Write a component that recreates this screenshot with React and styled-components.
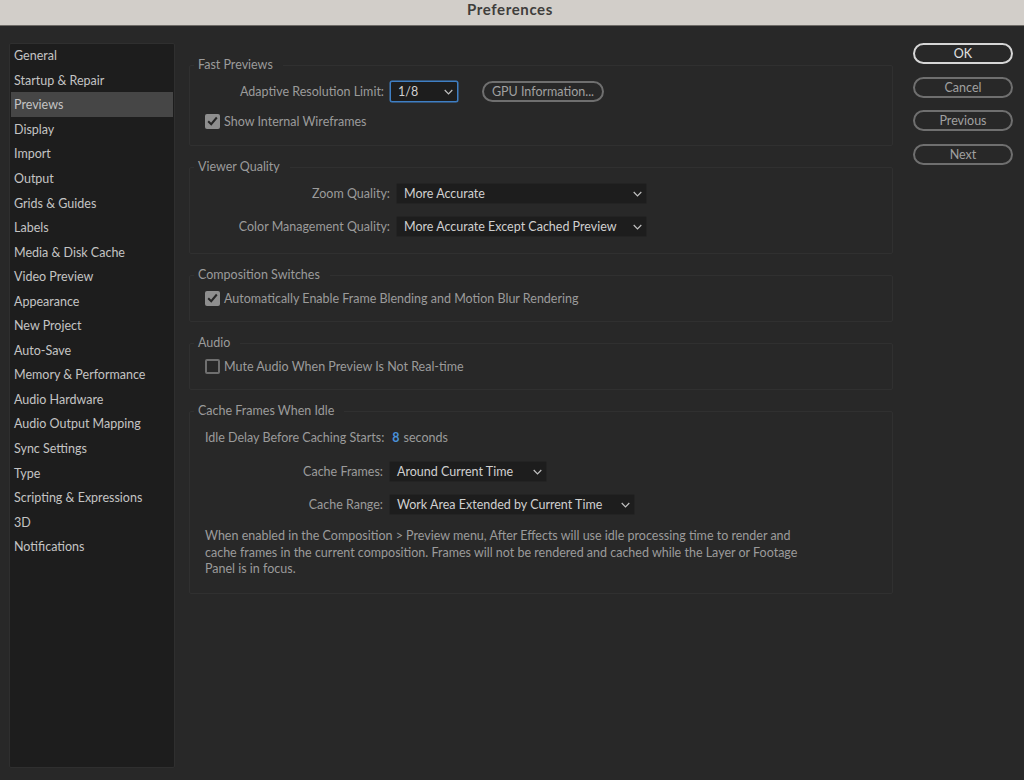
import React from "react";
import styled, { createGlobalStyle } from "styled-components";

const Global = createGlobalStyle`
  html, body { margin: 0; padding: 0; background: #282828; }
  body { font-family: "Lato", "Open Sans", sans-serif; overflow: hidden; }
  * { box-sizing: border-box; }
`;

const Window = styled.div`
  width: 1024px;
  height: 780px;
  display: flex;
  flex-direction: column;
  background: #282828;
`;

const TitleBar = styled.div`
  height: 26px;
  flex: none;
  display: flex;
  align-items: flex-start;
  justify-content: center;
  padding-right: 4px;
  background: #d2cec9;
  border-bottom: 1px solid #6e6b67;
  color: #3f3e3c;
  font-size: 15px;
  font-weight: 700;
  line-height: 19px;
  letter-spacing: 0.6px;
`;

const Body = styled.div`
  flex: 1;
  display: flex;
  padding: 17px 11px 12px 9px;
`;

const Sidebar = styled.nav`
  width: 166px;
  flex: none;
  display: flex;
  flex-direction: column;
  padding: 0 1px 1px;
  background: #1d1d1d;
  border: 1px solid #2f2f2f;
  border-radius: 2px;
`;

const NavItem = styled.div`
  height: 24.55px;
  flex: none;
  display: flex;
  align-items: center;
  padding: 1px 0 0 3px;
  font-size: 12.5px;
  color: #c4c4c4;
  background: ${(p) => (p.$active ? "#464646" : "transparent")};
  &:first-child { margin-top: -1px; }
`;

const Main = styled.main`
  width: 704px;
  flex: none;
  margin-left: 14px;
  margin-top: 13px;
  display: flex;
  flex-direction: column;
  gap: 12px;
`;

const Group = styled.fieldset`
  margin: 0;
  min-width: 0;
  height: ${(p) => p.$h}px;
  padding: 0 16px 0 15px;
  border: 1px solid #303030;
  border-radius: 2px;
  display: flex;
  flex-direction: column;
`;

const Legend = styled.legend`
  margin-left: -11px;
  padding: 0 10px 0 4px;
  height: 18px;
  line-height: 18px;
  font-size: 12.5px;
  color: #9b9b9b;
`;

const Row = styled.div`
  display: flex;
  align-items: center;
  height: 21px;
  margin-top: ${(p) => p.$top || 0}px;
`;

const Label = styled.div`
  width: ${(p) => p.$w}px;
  flex: none;
  margin-right: 6px;
  text-align: right;
  font-size: 12.5px;
  color: #9b9b9b;
  white-space: nowrap;
`;

const Select = styled.div`
  width: ${(p) => p.$w}px;
  height: 21px;
  flex: none;
  display: flex;
  align-items: center;
  justify-content: space-between;
  padding: 0 4px 0 7px;
  background: #1d1d1d;
  border: ${(p) => (p.$focus ? "1px solid #3f7fc4" : "1px solid #232323")};
  border-radius: 2px;
  font-size: 12.5px;
  color: #d0d0d0;
  white-space: nowrap;
  box-shadow: ${(p) => (p.$focus ? "0 0 0 0.5px #3f7fc4" : "none")};
`;

const Chevron = styled.svg`
  width: 9px;
  height: 6px;
  flex: none;
  fill: none;
  stroke: #c0c0c0;
  stroke-width: 1.2;
`;

const PillButton = styled.button`
  width: ${(p) => p.$w || 100}px;
  height: 21px;
  flex: none;
  margin-left: ${(p) => p.$left || 0}px;
  padding: 0;
  background: transparent;
  border: 2px solid ${(p) => (p.$primary ? "#d6d6d6" : "#6f6f6f")};
  border-radius: 11px;
  font-family: inherit;
  font-size: 12.5px;
  line-height: 15px;
  color: ${(p) => (p.$primary ? "#e2e2e2" : "#a0a0a0")};
`;

const CheckRow = styled.div`
  display: flex;
  align-items: center;
  gap: 4px;
  height: 16px;
  margin-top: ${(p) => p.$top || 0}px;
  font-size: 12.5px;
  color: #9b9b9b;
  white-space: nowrap;
`;

const Box = styled.span`
  width: 15px;
  height: 15px;
  flex: none;
  display: flex;
  align-items: center;
  justify-content: center;
  border-radius: 2px;
  background: ${(p) => (p.$checked ? "#8e8e8e" : "transparent")};
  border: ${(p) => (p.$checked ? "none" : "2px solid #6f6f6f")};
`;

const Tick = styled.svg`
  width: 11px;
  height: 10px;
  fill: none;
  stroke: #262626;
  stroke-width: 2;
`;

const Plain = styled.div`
  height: 17px;
  line-height: 17px;
  margin-top: ${(p) => p.$top || 0}px;
  font-size: 12.5px;
  color: #9b9b9b;
`;

const Num = styled.span`
  color: #4a90d9;
  margin: 0 4px 0 8px;
  font-weight: 700;
`;

const Note = styled.p`
  margin: 13px 0 0;
  width: 610px;
  font-size: 12.5px;
  line-height: 16.6px;
  color: #9b9b9b;
`;

const Actions = styled.div`
  flex: none;
  margin-left: 20px;
  display: flex;
  flex-direction: column;
  gap: 12.5px;
`;

const Arrow = () => (
  <Chevron viewBox="0 0 9 6"><path d="M0.7 1 L4.5 4.8 L8.3 1" /></Chevron>
);

const Check = ({ checked, children, top }) => (
  <CheckRow $top={top}>
    <Box $checked={checked}>
      {checked && <Tick viewBox="0 0 11 10"><path d="M1.2 5.2 L4.2 8.2 L9.8 1.5" /></Tick>}
    </Box>
    {children}
  </CheckRow>
);

const navItems = [
  "General", "Startup & Repair", "Previews", "Display", "Import", "Output",
  "Grids & Guides", "Labels", "Media & Disk Cache", "Video Preview", "Appearance",
  "New Project", "Auto-Save", "Memory & Performance", "Audio Hardware",
  "Audio Output Mapping", "Sync Settings", "Type", "Scripting & Expressions", "3D",
  "Notifications",
];

export default function App() {
  return (
    <Window>
      <Global />
      <TitleBar>Preferences</TitleBar>
      <Body>
        <Sidebar>
          {navItems.map((n) => (
            <NavItem key={n} $active={n === "Previews"}>{n}</NavItem>
          ))}
        </Sidebar>
        <Main>
          <Group $h={90}>
            <Legend>Fast Previews</Legend>
            <Row $top={7}>
              <Label $w={179}>Adaptive Resolution Limit:</Label>
              <Select $w={68} $focus>1/8<Arrow /></Select>
              <PillButton $w={122} $left={24}>GPU Information...</PillButton>
            </Row>
            <Check checked top={11}>Show Internal Wireframes</Check>
          </Group>
          <Group $h={96}>
            <Legend>Viewer Quality</Legend>
            <Row $top={7}>
              <Label $w={185}>Zoom Quality:</Label>
              <Select $w={251}>More Accurate<Arrow /></Select>
            </Row>
            <Row $top={12}>
              <Label $w={185}>Color Management Quality:</Label>
              <Select $w={251}>More Accurate Except Cached Preview<Arrow /></Select>
            </Row>
          </Group>
          <Group $h={56}>
            <Legend>Composition Switches</Legend>
            <Check checked top={6}>Automatically Enable Frame Blending and Motion Blur Rendering</Check>
          </Group>
          <Group $h={56}>
            <Legend>Audio</Legend>
            <Check top={6}>Mute Audio When Preview Is Not Real-time</Check>
          </Group>
          <Group $h={192}>
            <Legend>Cache Frames When Idle</Legend>
            <Plain $top={9}>Idle Delay Before Caching Starts:<Num>8</Num>seconds</Plain>
            <Row $top={15}>
              <Label $w={178}>Cache Frames:</Label>
              <Select $w={158}>Around Current Time<Arrow /></Select>
            </Row>
            <Row $top={12}>
              <Label $w={178}>Cache Range:</Label>
              <Select $w={246}>Work Area Extended by Current Time<Arrow /></Select>
            </Row>
            <Note>
              When enabled in the Composition &gt; Preview menu, After Effects will use idle processing time to render and
              cache frames in the current composition. Frames will not be rendered and cached while the Layer or Footage
              Panel is in focus.
            </Note>
          </Group>
        </Main>
        <Actions>
          <PillButton $primary>OK</PillButton>
          <PillButton>Cancel</PillButton>
          <PillButton>Previous</PillButton>
          <PillButton>Next</PillButton>
        </Actions>
      </Body>
    </Window>
  );
}
